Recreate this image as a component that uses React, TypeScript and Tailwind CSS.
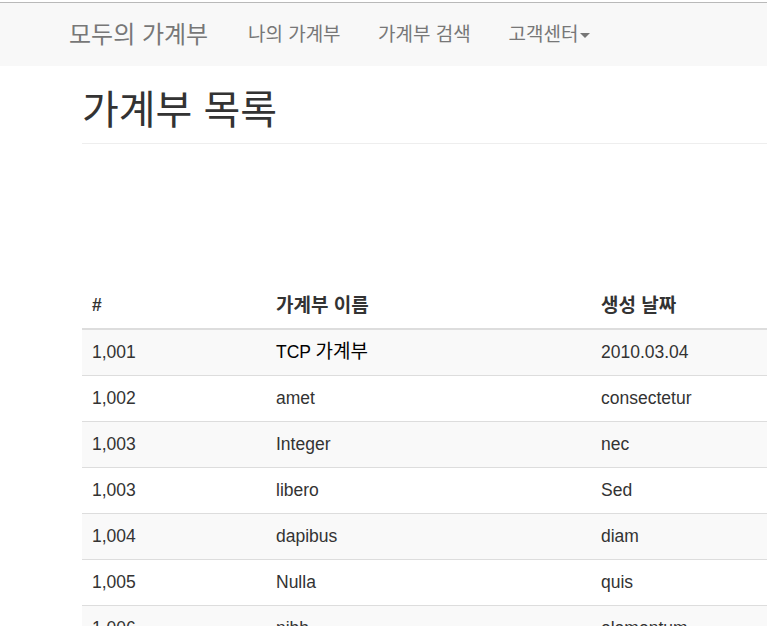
const font = { fontFamily: '"Liberation Sans", "Noto Sans CJK KR", Arial, sans-serif' };

type Row = { id: string; name: string; ko?: string; date: string; dark?: boolean };

const rows: Row[] = [
  { id: '1,001', name: 'TCP ', ko: '가계부', date: '2010.03.04', dark: true },
  { id: '1,002', name: 'amet', date: 'consectetur' },
  { id: '1,003', name: 'Integer', date: 'nec' },
  { id: '1,003', name: 'libero', date: 'Sed' },
  { id: '1,004', name: 'dapibus', date: 'diam' },
  { id: '1,005', name: 'Nulla', date: 'quis' },
  { id: '1,006', name: 'nibh', date: 'elementum' },
  { id: '1,007', name: 'ligula', date: 'tincidunt' },
];

function Navbar() {
  return (
    <nav className="mt-[2px] border-t border-[#b9b9b9] bg-[#f8f8f8] h-[64px] flex items-center">
      <div className="flex items-center pl-[69px] text-[#777]">
        <a className="text-[24px] leading-[30px] pr-[21px]">모두의 가계부</a>
        <a className="text-[19px] leading-[25px] px-[18.75px]">나의 가계부</a>
        <a className="text-[19px] leading-[25px] px-[18.75px]">가계부 검색</a>
        <a className="text-[19px] leading-[25px] pl-[19px] flex items-center">
          고객센터
          {/* caret */}
          <span className="ml-[2px] mt-[2px] w-0 h-0 border-l-[5px] border-r-[5px] border-t-[5px] border-l-transparent border-r-transparent border-t-[#777]" />
        </a>
      </div>
    </nav>
  );
}

export default function App() {
  return (
    <div className="w-[767px] h-[626px] overflow-hidden bg-white text-[#333]" style={font}>
      <Navbar />

      <div className="pl-[82px] w-[1040px]">
        {/* page header */}
        <div className="pt-[22px] pb-[11px] border-b border-[#eee]">
          <h1 className="text-[40px] leading-[44px] font-normal text-[#333]">가계부 목록</h1>
        </div>

        <table className="mt-[139px] w-[940px] table-fixed border-collapse text-[17.5px]">
          <colgroup>
            <col className="w-[184px]" />
            <col className="w-[325px]" />
            <col />
          </colgroup>
          <thead>
            <tr className="border-b-2 border-[#ddd]">
              <th className="h-[46px] px-[10px] text-left font-bold leading-[25px]">#</th>
              <th className="h-[46px] px-[10px] text-left font-bold leading-[25px] text-[19px]">가계부 이름</th>
              <th className="h-[46px] px-[10px] text-left font-bold leading-[25px] text-[19px]">생성 날짜</th>
            </tr>
          </thead>
          <tbody>
            {rows.map((r, i) => (
              <tr
                key={i}
                className={`border-b border-[#ddd] ${i % 2 === 0 ? 'bg-[#f9f9f9]' : 'bg-white'}`}
              >
                <td className="h-[46px] px-[10px] leading-[25px]">{r.id}</td>
                <td className={`h-[46px] px-[10px] leading-[25px] ${r.dark ? 'text-black' : ''}`}>
                  {r.name}
                  {r.ko && <span className="text-[19px]">{r.ko}</span>}
                </td>
                <td className="h-[46px] px-[10px] leading-[25px]">{r.date}</td>
              </tr>
            ))}
          </tbody>
        </table>
      </div>
    </div>
  );
}
